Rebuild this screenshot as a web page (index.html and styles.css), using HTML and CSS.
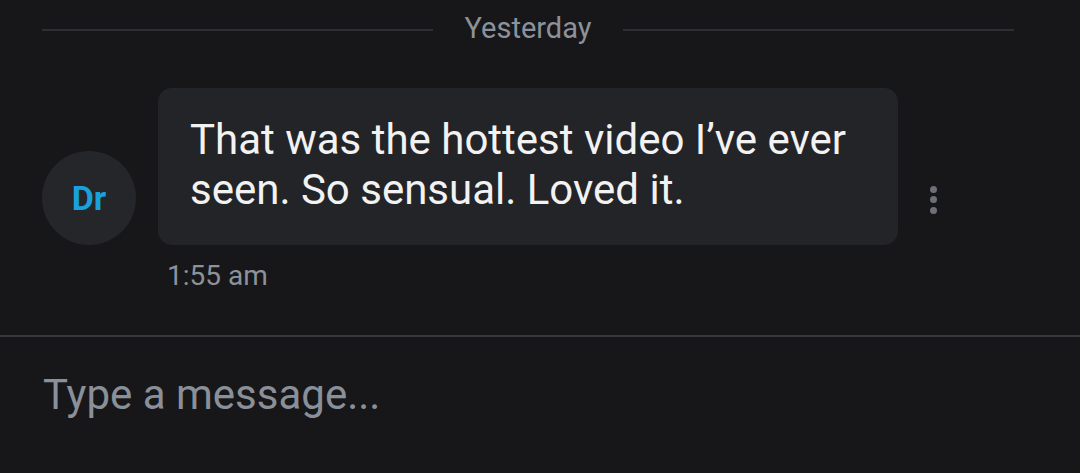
FILE: index.html
```html
<!DOCTYPE html>
<html>
<head>
<meta charset="utf-8">
<link rel="stylesheet" href="styles.css">
</head>
<body>
<div class="chat">
  <div class="day">
    <span class="line"></span>
    <span class="day-label">Yesterday</span>
    <span class="line"></span>
  </div>
  <div class="msg">
    <div class="avatar">Dr</div>
    <div class="msg-body">
      <div class="bubble-row">
        <div class="bubble">That was the hottest video I’ve ever seen. So sensual. Loved it.</div>
        <div class="more"><span></span><span></span><span></span></div>
      </div>
      <div class="time">1:55 am</div>
    </div>
  </div>
</div>
<div class="composer">
  <div class="placeholder">Type a message...</div>
</div>
</body>
</html>
```

FILE: styles.css
```css
html, body {
  margin: 0;
  padding: 0;
  background: #17171a;
  height: 473px;
  overflow: hidden;
  font-family: Roboto, "Noto Sans", sans-serif;
}
.chat {
  height: 335px;
  padding: 0 66px 0 42px;
  box-sizing: border-box;
}
.day {
  display: flex;
  align-items: flex-start;
  gap: 32px;
  padding-top: 10px;
  height: 38px;
}
.line {
  flex: 1;
  height: 2px;
  background: #2d2e32;
  margin-top: 19px;
}
.day-label {
  color: #8d929a;
  font-size: 29px;
  line-height: 36px;
}
.msg {
  display: flex;
  align-items: flex-start;
  gap: 22px;
  margin-top: 40px;
}
.avatar {
  width: 94px;
  height: 94px;
  border-radius: 50%;
  background: #25262a;
  color: #1ba0de;
  font-weight: 700;
  font-size: 34px;
  display: flex;
  align-items: center;
  justify-content: center;
  margin-top: 63px;
  flex: none;
}
.msg-body {
  flex: 1;
}
.bubble-row {
  display: flex;
  align-items: flex-start;
}
.bubble {
  width: 740px;
  box-sizing: border-box;
  background: #232428;
  border-radius: 14px;
  padding: 27px 32px 0;
  color: #f2f2f2;
  font-size: 42px;
  line-height: 50px;
  height: 157px;
}
.more {
  display: flex;
  flex-direction: column;
  gap: 3.5px;
  margin-left: 31.5px;
  margin-top: 97.5px;
}
.more span {
  width: 7px;
  height: 7px;
  border-radius: 50%;
  background: #6d7077;
}
.time {
  color: #8d929a;
  font-size: 28px;
  margin-top: 14px;
  margin-left: 9px;
}
.composer {
  border-top: 2px solid #37383c;
  height: 138px;
  padding: 30px 43px 0;
  box-sizing: border-box;
}
.placeholder {
  color: #8a9099;
  font-size: 42px;
  line-height: 56px;
}
```
